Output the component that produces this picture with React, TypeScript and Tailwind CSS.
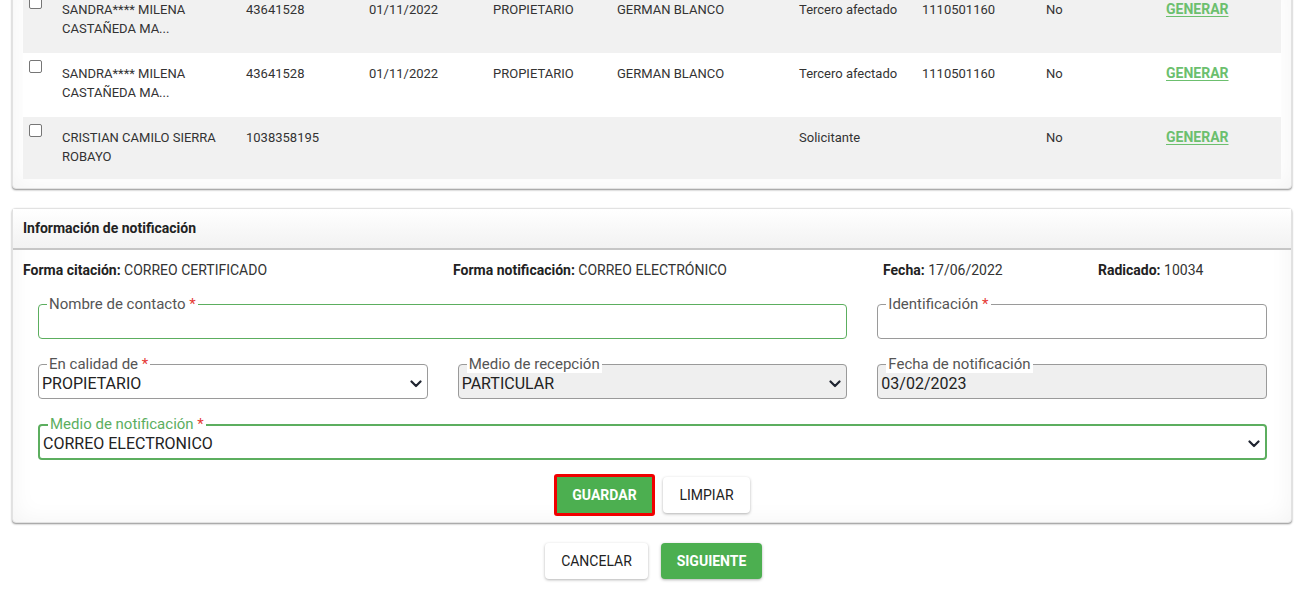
import React from "react";

const ROWS = [
  {
    name: ["SANDRA**** MILENA", "CASTAÑEDA MA..."],
    doc: "43641528",
    date: "01/11/2022",
    role: "PROPIETARIO",
    owner: "GERMAN BLANCO",
    type: "Tercero afectado",
    num: "1110501160",
    flag: "No",
  },
  {
    name: ["SANDRA**** MILENA", "CASTAÑEDA MA..."],
    doc: "43641528",
    date: "01/11/2022",
    role: "PROPIETARIO",
    owner: "GERMAN BLANCO",
    type: "Tercero afectado",
    num: "1110501160",
    flag: "No",
  },
  {
    name: ["CRISTIAN CAMILO SIERRA", "ROBAYO"],
    doc: "1038358195",
    date: "",
    role: "",
    owner: "",
    type: "Solicitante",
    num: "",
    flag: "No",
  },
];

const COLS = "grid grid-cols-[33px_184px_123px_124px_124px_182px_123px_124px_120px_1fr]";

function Chevron() {
  return (
    <svg width="12" height="8" viewBox="0 0 12 8" className="shrink-0">
      <polyline points="1.5,1.5 6,6 10.5,1.5" fill="none" stroke="#1f2430" strokeWidth="2.2" strokeLinecap="round" strokeLinejoin="round" />
    </svg>
  );
}

function Field({
  label,
  required,
  value,
  select,
  disabled,
  active,
  focused,
  className,
}: {
  label: string;
  required?: boolean;
  value?: string;
  select?: boolean;
  disabled?: boolean;
  active?: boolean;
  focused?: boolean;
  className?: string;
}) {
  const border = focused
    ? "border-2 border-[#5cae5f]"
    : active
    ? "border border-[#5cae5f]"
    : "border border-[#9a9a9a]";
  return (
    <fieldset
      className={`${border} rounded-[4px] pl-[3px] pr-[5px] ${disabled ? "bg-[#efefef]" : "bg-white"} ${className ?? ""}`}
    >
      <legend
        className={`ml-[5px] px-[2px] bg-white text-[15px] leading-[17px] ${focused ? "text-[#5cae5f]" : "text-[#555]"}`}
      >
        {label}
        {required && <span className="text-[#e53935]"> *</span>}
      </legend>
      <div className="h-[25px] flex items-center justify-between text-[16px] text-[#222] pb-[3px]">
        <span>{value}</span>
        {select && <Chevron />}
      </div>
    </fieldset>
  );
}

export default function App() {
  return (
    <div className="min-h-screen bg-white font-['Roboto','Liberation_Sans',sans-serif] text-[13px] text-[#333] overflow-hidden">
      {/* tabla de involucrados */}
      <div className="mx-[12px] w-[1280px] -mt-[22px] rounded-[4px] bg-white border border-[#e2e2e2] shadow-[0_1px_2px_rgba(0,0,0,0.45),inset_0_0_24px_rgba(0,0,0,0.05)] pt-[10px] pb-[9px] px-[10px]">
        {ROWS.map((r, i) => (
          <div
            key={i}
            className={`${COLS} ${i === ROWS.length - 1 ? "h-[62px]" : "h-[64px]"} ${i % 2 === 0 ? "bg-[#f1f1f1]" : "bg-white"} leading-[19px]`}
          >
            <div className="pl-[6px] pt-[7px]">
              <span className="block w-[13px] h-[13px] rounded-[2px] border border-[#767676] bg-white" />
            </div>
            <div className="px-[6px] pt-[11px]">
              <div>{r.name[0]}</div>
              <div>{r.name[1]}</div>
            </div>
            <div className="px-[6px] pt-[11px]">{r.doc}</div>
            <div className="px-[6px] pt-[11px]">{r.date}</div>
            <div className="px-[6px] pt-[11px]">{r.role}</div>
            <div className="px-[6px] pt-[11px]">{r.owner}</div>
            <div className="px-[6px] pt-[11px]">{r.type}</div>
            <div className="px-[6px] pt-[11px]">{r.num}</div>
            <div className="px-[6px] pt-[11px]">{r.flag}</div>
            <div className="px-[6px] pt-[11px]">
              <a className="font-bold text-[14px] text-[#6cbf6e] underline underline-offset-2">GENERAR</a>
            </div>
          </div>
        ))}
      </div>

      {/* información de notificación */}
      <div className="mx-[12px] w-[1280px] mt-[19px] rounded-[4px] bg-white border border-[#e2e2e2] shadow-[0_1px_2px_rgba(0,0,0,0.45),inset_0_0_24px_rgba(0,0,0,0.05)]">
        <div className="h-[41px] flex items-center px-[10px] bg-gradient-to-b from-white to-[#f2f2f2] border-b-2 border-[#c6c6c6] font-bold text-[14px] text-[#222]">
          Información de notificación
        </div>
        <div className="flex items-center h-[38px] px-[10px] pt-[2px] text-[14px]">
          <div className="w-[430px]">
            <b className="text-[#222]">Forma citación:</b> CORREO CERTIFICADO
          </div>
          <div className="w-[430px]">
            <b className="text-[#222]">Forma notificación:</b> CORREO ELECTRÓNICO
          </div>
          <div className="w-[215px]">
            <b className="text-[#222]">Fecha:</b> 17/06/2022
          </div>
          <div>
            <b className="text-[#222]">Radicado:</b> 10034
          </div>
        </div>
        <div className="grid grid-cols-3 gap-x-[30px] gap-y-[17px] pl-[25px] pr-[24px] pt-[8px]">
          <Field label="Nombre de contacto" required active className="col-span-2" />
          <Field label="Identificación" required />
          <Field label="En calidad de" required value="PROPIETARIO" select />
          <Field label="Medio de recepción" value="PARTICULAR" select disabled />
          <Field label="Fecha de notificación" value="03/02/2023" disabled />
          <Field label="Medio de notificación" required value="CORREO ELECTRONICO" select focused className="col-span-3" />
        </div>
        <div className="flex justify-center items-center gap-[8px] pt-[14px] pb-[6px]">
          <div className="border-[3px] border-[#f00000] rounded-[3px]">
            <button className="w-[95px] h-[36px] bg-[#4caf50] text-white font-bold text-[14px]">GUARDAR</button>
          </div>
          <button className="w-[87px] h-[36px] bg-white rounded-[4px] shadow-[0_1px_3px_rgba(0,0,0,0.3)] text-[14px] text-[#222]">
            LIMPIAR
          </button>
        </div>
      </div>

      <div className="flex justify-center gap-[13px] mt-[20px] pl-[2px]">
        <button className="w-[103px] h-[36px] bg-white rounded-[4px] shadow-[0_1px_3px_rgba(0,0,0,0.3)] text-[14px] text-[#222]">
          CANCELAR
        </button>
        <button className="w-[101px] h-[36px] bg-[#4caf50] rounded-[4px] shadow-[0_1px_3px_rgba(0,0,0,0.3)] text-[14px] text-white font-bold">
          SIGUIENTE
        </button>
      </div>
    </div>
  );
}
